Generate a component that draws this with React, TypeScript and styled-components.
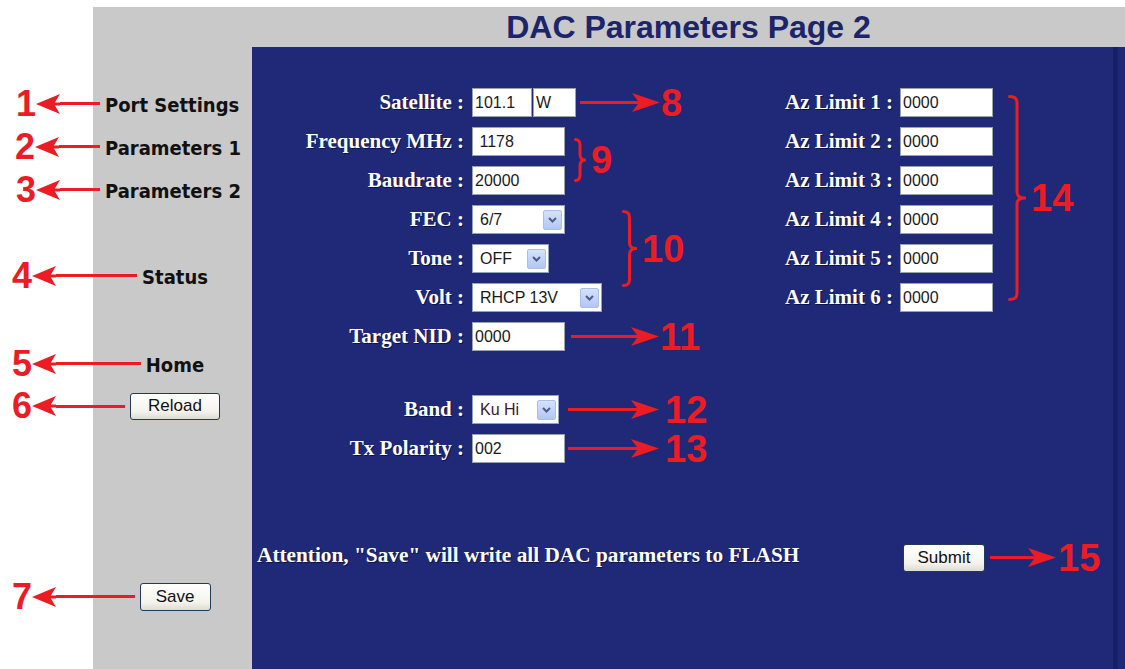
import React from 'react';
import styled, { createGlobalStyle } from 'styled-components';

const RED = '#ec1c24';
const NAVY = '#1f2977';
const GRAY = '#c9c9c9';

const GlobalStyle = createGlobalStyle`
    html, body {
        margin: 0;
        padding: 0;
        background: #fff;
    }
    body {
        font-family: "Liberation Sans", Arial, sans-serif;
        overflow: hidden;
    }
`;

const Page = styled.div`
    width: 1125px;
    height: 669px;
    padding-top: 7px;
    box-sizing: border-box;
    display: flex;
    flex-direction: column;
`;

const Header = styled.header`
    margin-left: 93px;
    height: 40px;
    flex: none;
    background: ${GRAY};
    display: grid;
    grid-template-columns: 159px 1fr;
    align-items: center;
`;

const Title = styled.h1`
    grid-column: 2;
    margin: 0;
    text-align: center;
    font: bold 32px 'Liberation Sans', Arial, sans-serif;
    line-height: 40px;
    color: #1c2569;
`;

const Body = styled.div`
    flex: 1;
    display: flex;
`;

const Sidebar = styled.nav`
    width: 252px;
    flex: none;
    box-sizing: border-box;
    padding-top: 35px;
    background: linear-gradient(90deg, #fff 93px, ${GRAY} 93px);
    display: flex;
    flex-direction: column;
`;

const SideRow = styled.div<{ $top?: number; $h?: number }>`
    display: grid;
    grid-template-columns: 93px 159px;
    height: ${(p) => p.$h ?? 43}px;
    margin-top: ${(p) => p.$top ?? 0}px;
`;

const NumCell = styled.div<{ $lead: number }>`
    display: flex;
    align-items: center;
    padding-left: ${(p) => p.$lead}px;
`;

const LinkCell = styled.div`
    display: flex;
    align-items: center;
`;

const Tail = styled.div<{ $w?: number }>`
    height: 3px;
    background: ${RED};
    margin-right: 5px;
    ${(p) => (p.$w !== undefined ? `width: ${p.$w}px; flex: none;` : 'flex: 1;')}
`;

const Fill = styled.div`
    flex: 1;
`;

const SideLink = styled.a`
    font: bold 20px 'DejaVu Sans Condensed', 'DejaVu Sans', Verdana, sans-serif;
    color: #111;
    text-decoration: none;
    white-space: nowrap;
    padding-top: 3px;
`;

const Num = styled.span<{ $size?: number }>`
    font: bold ${(p) => p.$size ?? 36}px 'Liberation Sans', Arial, sans-serif;
    line-height: 1;
    color: ${RED};
    flex: none;
`;

const ArrowWrap = styled.div<{ $w?: number }>`
    display: flex;
    align-items: center;
    ${(p) => (p.$w !== undefined ? `width: ${p.$w}px; flex: none;` : 'flex: 1; min-width: 0;')}
`;

const Shaft = styled.div`
    flex: 1;
    height: 3px;
    background: ${RED};
`;

const Arrow = ({ dir, w }: { dir: 'left' | 'right'; w?: number }) => {
    const head =
        dir === 'right' ? (
            <svg width="28" height="19" viewBox="0 0 28 19">
                <rect x="0" y="8" width="8" height="3" fill={RED} />
                <path d="M28 9.5 L0 0 L7 9.5 L0 19 Z" fill={RED} />
            </svg>
        ) : (
            <svg width="24" height="20" viewBox="0 0 24 20">
                <rect x="16" y="8.5" width="8" height="3" fill={RED} />
                <path d="M0 10 L24 0 L18 10 L24 20 Z" fill={RED} />
            </svg>
        );
    return (
        <ArrowWrap $w={w}>
            {dir === 'left' && head}
            <Shaft />
            {dir === 'right' && head}
        </ArrowWrap>
    );
};

const XpButton = styled.button<{ $w: number; $h?: number }>`
    width: ${(p) => p.$w}px;
    height: ${(p) => p.$h ?? 27}px;
    padding: 0;
    flex: none;
    border: 1px solid #23395b;
    border-radius: 3px;
    background: linear-gradient(#ffffff, #f4f3ee 70%, #dedbd0);
    font: 17px 'Liberation Sans', Arial, sans-serif;
    color: #111;
`;

const Panel = styled.main`
    flex: 1;
    box-sizing: border-box;
    padding-top: 36px;
    background: linear-gradient(
        90deg,
        ${NAVY} calc(100% - 12px),
        #171f66 calc(100% - 12px),
        #171f66 calc(100% - 7px),
        ${NAVY} calc(100% - 7px)
    );
    display: flex;
    flex-direction: column;
`;

const Columns = styled.div`
    display: flex;
    align-items: flex-start;
`;

const LeftForm = styled.div`
    width: 533px;
    flex: none;
    display: flex;
    flex-direction: column;
`;

const RightForm = styled.div`
    display: flex;
    align-items: flex-start;
`;

const Stack = styled.div`
    display: flex;
    flex-direction: column;
`;

const Group = styled.div`
    display: flex;
    align-items: flex-start;
`;

const FormRow = styled.div<{ $label: number; $gap: number }>`
    display: grid;
    grid-template-columns: ${(p) => p.$label}px auto;
    column-gap: ${(p) => p.$gap}px;
    align-items: center;
    height: 39px;
`;

const Label = styled.label`
    text-align: right;
    white-space: nowrap;
    font: bold 21px 'Liberation Serif', 'Times New Roman', serif;
    color: #fff;
    text-shadow: 1px 1px 0 #0d1248;
`;

const Controls = styled.div`
    display: flex;
    align-items: center;
    gap: 1px;
`;

const TextBox = styled.input<{ $w: number }>`
    width: ${(p) => p.$w}px;
    height: 29px;
    box-sizing: border-box;
    margin: 0;
    padding: 0 2px;
    border: 1px solid #9aa3ad;
    background: #fff;
    font: 16px 'Liberation Sans', Arial, sans-serif;
    color: #1a1a1a;
    outline: none;
`;

const SelectBox = styled.div<{ $w: number }>`
    width: ${(p) => p.$w}px;
    height: 29px;
    box-sizing: border-box;
    border: 1px solid #8fa3bf;
    background: #fff;
    display: flex;
    align-items: center;
    justify-content: space-between;
    padding: 0 2px 0 7px;
    font: 16px 'Liberation Sans', Arial, sans-serif;
    color: ${(p) => p.color ?? '#1a1a1a'};
`;

const DropBtn = styled.span`
    width: 19px;
    height: 20px;
    box-sizing: border-box;
    border: 1px solid #a9bfea;
    border-radius: 2px;
    background: linear-gradient(#d6e2fb, #b1c7f2);
    display: flex;
    align-items: center;
    justify-content: center;
`;

const Select = ({ w, value, color }: { w: number; value: string; color?: string }) => (
    <SelectBox $w={w} color={color}>
        <span>{value}</span>
        <DropBtn>
            <svg width="9" height="6" viewBox="0 0 9 6">
                <path d="M1 1 L4.5 4.5 L8 1" stroke="#4a5f86" strokeWidth="2" fill="none" />
            </svg>
        </DropBtn>
    </SelectBox>
);

const NoteWrap = styled.div<{ $ml: number; $gap: number }>`
    display: flex;
    align-items: center;
    margin-left: ${(p) => p.$ml}px;
    gap: ${(p) => p.$gap}px;
`;

const Note = ({ n, ml, w, gap = 1 }: { n: string; ml: number; w: number; gap?: number }) => (
    <NoteWrap $ml={ml} $gap={gap}>
        <Arrow dir="right" w={w} />
        <Num $size={38}>{n}</Num>
    </NoteWrap>
);

// the brace is nudged down without taking up room in the flow
const BraceWrap = styled.div<{ $ml: number; $mt: number }>`
    display: flex;
    align-items: center;
    margin-left: ${(p) => p.$ml}px;
    margin-top: ${(p) => p.$mt}px;
    margin-bottom: ${(p) => -p.$mt}px;
    gap: 5px;
`;

const Brace = ({ n, h, w, ml, mt }: { n: string; h: number; w: number; ml: number; mt: number }) => {
    const x0 = 1.5;
    const x1 = w / 2;
    const x2 = w - 1;
    const m = h / 2;
    const r = Math.min(6, h / 6);
    const d = `M${x0} 1.5 Q${x1} 1.5 ${x1} ${r + 1.5} L${x1} ${m - r} Q${x1} ${m} ${x2} ${m} Q${x1} ${m} ${x1} ${m + r} L${x1} ${h - r - 1.5} Q${x1} ${h - 1.5} ${x0} ${h - 1.5}`;
    return (
        <BraceWrap $ml={ml} $mt={mt}>
            <svg width={w} height={h} viewBox={`0 0 ${w} ${h}`}>
                <path d={d} stroke={RED} strokeWidth="3" fill="none" strokeLinecap="round" strokeLinejoin="round" />
            </svg>
            <Num $size={38}>{n}</Num>
        </BraceWrap>
    );
};

const Spacer = styled.div<{ $h: number }>`
    height: ${(p) => p.$h}px;
`;

const BottomBar = styled.div`
    display: flex;
    align-items: center;
    height: 39px;
    margin-top: 70px;
    padding-left: 5px;
`;

const Notice = styled.div`
    width: 646px;
    flex: none;
    font: bold 21.3px 'Liberation Serif', 'Times New Roman', serif;
    color: #fff;
    text-shadow: 1px 1px 0 #0d1248;
    white-space: nowrap;
    margin-top: -4px;
`;

const Row = ({ label, children }: { label: string; children: React.ReactNode }) => (
    <FormRow $label={212} $gap={8}>
        <Label>{label}</Label>
        <Controls>{children}</Controls>
    </FormRow>
);

const AzRow = ({ n }: { n: number }) => (
    <FormRow $label={105} $gap={10}>
        <Label>{`Az Limit ${n} :`}</Label>
        <Controls>
            <TextBox $w={93} defaultValue="0000" readOnly />
        </Controls>
    </FormRow>
);

export default function App() {
    return (
        <>
            <GlobalStyle />
            <Page>
                <Header>
                    <Title>DAC Parameters Page 2</Title>
                </Header>
                <Body>
                    <Sidebar>
                        <SideRow>
                            <NumCell $lead={16}>
                                <Num>1</Num>
                                <Arrow dir="left" />
                            </NumCell>
                            <LinkCell>
                                <Tail $w={7} />
                                <SideLink>Port Settings</SideLink>
                            </LinkCell>
                        </SideRow>
                        <SideRow>
                            <NumCell $lead={15}>
                                <Num>2</Num>
                                <Arrow dir="left" />
                            </NumCell>
                            <LinkCell>
                                <Tail $w={7} />
                                <SideLink>Parameters 1</SideLink>
                            </LinkCell>
                        </SideRow>
                        <SideRow>
                            <NumCell $lead={16}>
                                <Num>3</Num>
                                <Arrow dir="left" />
                            </NumCell>
                            <LinkCell>
                                <Tail $w={7} />
                                <SideLink>Parameters 2</SideLink>
                            </LinkCell>
                        </SideRow>
                        <SideRow $top={43}>
                            <NumCell $lead={12}>
                                <Num>4</Num>
                                <Arrow dir="left" />
                            </NumCell>
                            <LinkCell>
                                <Tail />
                                <SideLink>Status</SideLink>
                                <Fill />
                            </LinkCell>
                        </SideRow>
                        <SideRow $top={45}>
                            <NumCell $lead={12}>
                                <Num>5</Num>
                                <Arrow dir="left" />
                            </NumCell>
                            <LinkCell>
                                <Tail />
                                <SideLink>Home</SideLink>
                                <Fill />
                            </LinkCell>
                        </SideRow>
                        <SideRow $h={42}>
                            <NumCell $lead={12}>
                                <Num>6</Num>
                                <Arrow dir="left" />
                            </NumCell>
                            <LinkCell>
                                <Tail />
                                <XpButton $w={90}>Reload</XpButton>
                                <Fill />
                            </LinkCell>
                        </SideRow>
                        <SideRow $top={148}>
                            <NumCell $lead={12}>
                                <Num>7</Num>
                                <Arrow dir="left" />
                            </NumCell>
                            <LinkCell>
                                <Tail />
                                <XpButton $w={71} $h={28}>Save</XpButton>
                                <Fill />
                            </LinkCell>
                        </SideRow>
                    </Sidebar>
                    <Panel>
                        <Columns>
                            <LeftForm>
                                <Row label="Satellite :">
                                    <TextBox $w={60} defaultValue="101.1" readOnly />
                                    <TextBox $w={43} defaultValue="W" readOnly />
                                    <Note n="8" ml={3} w={80} />
                                </Row>
                                <Group>
                                    <Stack>
                                        <Row label="Frequency MHz :">
                                            <TextBox $w={93} defaultValue=" 1178" readOnly />
                                        </Row>
                                        <Row label="Baudrate :">
                                            <TextBox $w={93} defaultValue="20000" readOnly />
                                        </Row>
                                    </Stack>
                                    <Brace n="9" h={44} w={12} ml={9} mt={16} />
                                </Group>
                                <Group>
                                    <Stack>
                                        <Row label="FEC :">
                                            <Select w={93} value="6/7" />
                                        </Row>
                                        <Row label="Tone :">
                                            <Select w={77} value="OFF" />
                                        </Row>
                                    </Stack>
                                    <Brace n="10" h={77} w={15} ml={57} mt={10} />
                                </Group>
                                <Row label="Volt :">
                                    <Select w={130} value="RHCP 13V" />
                                </Row>
                                <Row label="Target NID :">
                                    <TextBox $w={93} defaultValue="0000" readOnly />
                                    <Note n="11" ml={5} w={88} />
                                </Row>
                                <Spacer $h={34} />
                                <Row label="Band :">
                                    <Select w={87} value="Ku Hi" color="#3d1733" />
                                    <Note n="12" ml={8} w={91} gap={6} />
                                </Row>
                                <Row label="Tx Polarity :">
                                    <TextBox $w={93} defaultValue="002" readOnly />
                                    <Note n="13" ml={2} w={91} gap={6} />
                                </Row>
                            </LeftForm>
                            <RightForm>
                                <Stack>
                                    {[1, 2, 3, 4, 5, 6].map((n) => (
                                        <AzRow key={n} n={n} />
                                    ))}
                                </Stack>
                                <Brace n="14" h={206} w={18} ml={15} mt={12} />
                            </RightForm>
                        </Columns>
                        <BottomBar>
                            <Notice>Attention, "Save" will write all DAC parameters to FLASH</Notice>
                            <XpButton $w={82} $h={28}>Submit</XpButton>
                            <Note n="15" ml={5} w={66} gap={2} />
                        </BottomBar>
                    </Panel>
                </Body>
            </Page>
        </>
    );
}
